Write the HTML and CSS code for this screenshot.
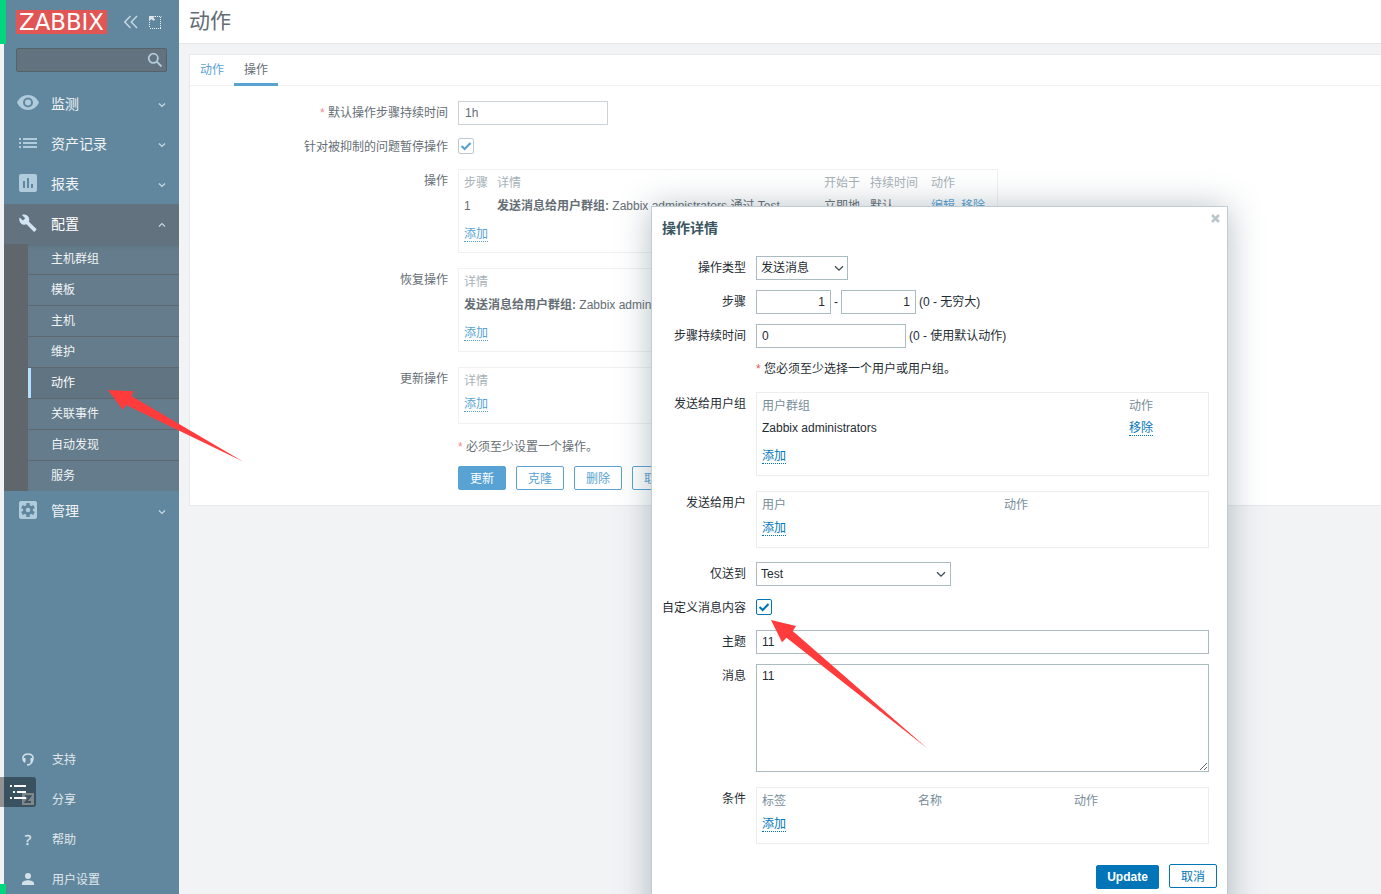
FILE: index.html
```
<!DOCTYPE html>
<html lang="zh-CN">
<head>
<meta charset="utf-8">
<title>动作</title>
<link rel="stylesheet" href="styles.css">
</head>
<body>
<div class="page">
  <aside class="sidebar">
    <div class="brand">
      <span class="logo">ZABBIX</span>
      <svg class="collapse" width="16" height="14" viewBox="0 0 16 14"><path d="M7.500 1 1.800 7l5.700 6M14 1 8.300 7l5.700 6"/></svg>
      <svg class="kiosk" width="13" height="13" viewBox="0 0 13 13"><path class="dots" d="M6 .5h6.500M11.500 1v11M1 12.500h11M.5 6v6"/><path class="tip" d="M0 0h6L4.300 1.700 6 3.500 4.500 5 2.500 3 0 5.500z"/></svg>
    </div>
    <div class="search"><svg width="16" height="16" viewBox="0 0 16 16"><circle cx="6.300" cy="6.300" r="4.600"/><path d="M9.700 9.700 14.500 14.500"/></svg></div>
    <nav class="menu">
      <a class="item"><svg class="ico" width="22" height="16" viewBox="0 0 22 16"><path fill-rule="evenodd" d="M11 0C6 0 2 3 0 7.500 2 12 6 15 11 15s9-3 11-7.500C20 3 16 0 11 0zm0 12.500a5 5 0 1 1 0-10 5 5 0 0 1 0 10z"/><circle cx="11" cy="7.500" r="3"/></svg><span>监测</span><svg class="chev" viewBox="0 0 8 6"><path d="M1 1.500 4 4.500 7 1.500"/></svg></a>
      <a class="item"><svg class="ico" width="18" height="12" viewBox="0 0 18 12"><path d="M0 1h2v2H0zM0 5h2v2H0zM0 9h2v2H0zM4 1h14v2H4zM4 5h14v2H4zM4 9h14v2H4z"/></svg><span>资产记录</span><svg class="chev" viewBox="0 0 8 6"><path d="M1 1.500 4 4.500 7 1.500"/></svg></a>
      <a class="item"><svg class="ico" width="18" height="18" viewBox="0 0 18 18"><path fill-rule="evenodd" d="M2 0h14a2 2 0 0 1 2 2v14a2 2 0 0 1-2 2H2a2 2 0 0 1-2-2V2a2 2 0 0 1 2-2zm2 7v7h2V7zm4-3v10h2V4zm4 6v4h2v-4z"/></svg><span>报表</span><svg class="chev" viewBox="0 0 8 6"><path d="M1 1.500 4 4.500 7 1.500"/></svg></a>
      <a class="item open"><svg class="ico" width="18" height="18" viewBox="0 0 18 19"><path d="M17.700 15.700 10 8.200c.7-2 .3-4.400-1.300-6C7 .6 4.600.2 2.600 1.100l3.500 3.400-2.500 2.400L.2 3.600C-.8 5.500-.2 8 1.400 9.700c1.600 1.600 4 2 6 1.200l7.500 7.500c.4.4.8.4 1.200 0l1.600-1.600c.4-.4.4-.8 0-1.100z"/></svg><span>配置</span><svg class="chev" viewBox="0 0 8 6"><path d="M1 4.500 4 1.500 7 4.500"/></svg></a>
      <div class="submenu">
        <a>主机群组</a><a>模板</a><a>主机</a><a>维护</a><a class="current">动作</a><a>关联事件</a><a>自动发现</a><a>服务</a>
      </div>
      <a class="item"><svg class="ico" width="18" height="18" viewBox="0 0 18 18"><path d="M2 0h14a2 2 0 0 1 2 2v14a2 2 0 0 1-2 2H2a2 2 0 0 1-2-2V2a2 2 0 0 1 2-2z"/><g class="cut"><circle cx="9" cy="9" r="5"/><path d="M7.300 2h3.400v14H7.300zM2.100 7l1.700-3 12.100 7-1.700 3zM14.200 4l1.700 3-12.100 7-1.700-3z"/></g><circle cx="9" cy="9" r="2.200"/></svg><span>管理</span><svg class="chev" viewBox="0 0 8 6"><path d="M1 1.500 4 4.500 7 1.500"/></svg></a>
    </nav>
    <nav class="userlinks">
      <a><svg width="12" height="13" viewBox="0 0 12 13"><path class="stroke" d="M2 8.500C-.6 3.500 2 .9 6 .9s6.600 2.600 4 7.600c-.4 2-1.700 3-3.500 3.300"/><path d="M1.300 5h2.200v4.500H2.200L.8 7.500zM10.700 5H8.500v4.500h1.300l1.400-2zM5 11h2.500v1.600H5z"/></svg><span>支持</span></a>
      <a><svg width="12" height="12" viewBox="0 0 12 12"><path d="M0 0h12v12H0z"/><path class="cutline" d="M3 3.200h5.200L3.800 8.900H9"/></svg><span>分享</span></a>
      <a><b class="question">?</b><span>帮助</span></a>
      <a><svg width="12" height="12" viewBox="0 0 12 12"><circle cx="6" cy="3" r="3"/><path d="M0 12v-1.700C0 8.300 3.500 7.300 6 7.300s6 1 6 3V12z"/></svg><span>用户设置</span></a>
    </nav>
  </aside>

  <main class="content">
    <header class="title"><h1>动作</h1></header>
    <section class="panel">
      <div class="tabs"><a>动作</a><a class="active">操作</a></div>
      <div class="form">
        <div class="row"><label><i>*</i> 默认操作步骤持续时间</label><input class="field" value="1h"></div>
        <div class="row check"><label>针对被抑制的问题暂停操作</label><span class="checkbox"><svg viewBox="0 0 12 12"><path d="M1.500 6 4.700 9 10.500 3"/></svg></span></div>
        <div class="row tall"><label>操作</label>
          <div class="box ops">
            <div class="tr head"><span>步骤</span><span>详情</span><span>开始于</span><span>持续时间</span><span>动作</span></div>
            <div class="tr"><span>1</span><span><b>发送消息给用户群组:</b> Zabbix administrators 通过 Test</span><span>立即地</span><span>默认</span><span><a class="link">编辑</a><a class="link next">移除</a></span></div>
            <div class="add spaced"><a class="link">添加</a></div>
          </div></div>
        <div class="row tall"><label>恢复操作</label>
          <div class="box">
            <div class="tr head"><span>详情</span></div>
            <div class="tr"><span><b>发送消息给用户群组:</b> Zabbix administrators</span></div>
            <div class="add spaced"><a class="link">添加</a></div>
          </div></div>
        <div class="row tall"><label>更新操作</label>
          <div class="box short">
            <div class="tr head"><span>详情</span></div>
            <div class="add"><a class="link">添加</a></div>
          </div></div>
        <div class="note"><i>*</i> 必须至少设置一个操作。</div>
        <div class="buttons"><button class="primary">更新</button><button>克隆</button><button>删除</button><button>取消</button></div>
      </div>
    </section>
  </main>

  <div class="dialog">
    <svg class="close" width="9" height="9" viewBox="0 0 9 9"><path d="M1 1l7 7M8 1 1 8"/></svg>
    <h2>操作详情</h2>
    <div class="row first"><label>操作类型</label><div class="select type">发送消息<svg viewBox="0 0 10 7"><path d="M1 1.200 5 5.200 9 1.200"/></svg></div></div>
    <div class="row"><label>步骤</label><input class="field num" value="1"><span class="dash">-</span><input class="field num" value="1"><span class="hint">(0 - 无穷大)</span></div>
    <div class="row"><label>步骤持续时间</label><input class="field" value="0"><span class="hint">(0 - 使用默认动作)</span></div>
    <div class="note"><i>*</i> 您必须至少选择一个用户或用户组。</div>
    <div class="row groups"><label>发送给用户组</label>
      <div class="box group-cols">
        <div class="tr head"><span>用户群组</span><span>动作</span></div>
        <div class="tr"><span>Zabbix administrators</span><span><a class="link">移除</a></span></div>
        <div class="add spaced"><a class="link">添加</a></div>
      </div></div>
    <div class="row tall"><label>发送给用户</label>
      <div class="box short user-cols">
        <div class="tr head"><span>用户</span><span>动作</span></div>
        <div class="add"><a class="link">添加</a></div>
      </div></div>
    <div class="row media"><label>仅送到</label><div class="select wide">Test<svg viewBox="0 0 10 7"><path d="M1 1.200 5 5.200 9 1.200"/></svg></div></div>
    <div class="row custom"><label>自定义消息内容</label><span class="checkbox"><svg viewBox="0 0 12 12"><path d="M1.500 6 4.700 9 10.500 3"/></svg></span></div>
    <div class="row"><label>主题</label><input class="field full" value="11"></div>
    <div class="row"><label>消息</label><textarea class="field">11</textarea></div>
    <div class="row tall"><label>条件</label>
      <div class="box short cond-cols">
        <div class="tr head"><span>标签</span><span>名称</span><span>动作</span></div>
        <div class="add"><a class="link">添加</a></div>
      </div></div>
    <div class="footer"><button class="primary update">Update</button><button>取消</button></div>
  </div>

  <span class="edge top"></span><span class="edge bottom"></span>
  <div class="toggle"><svg width="16" height="16" viewBox="0 0 16 16"><path d="M0 1h2v2H0zM4 1h12v2H4zM3 7h2v2H3zM7 7h9v2H7zM0 13h2v2H0zM4 13h12v2H4z"/></svg></div>
  <svg class="arrows" width="1381" height="894" viewBox="0 0 1381 894"><path d="M108 390 133.700 391.300 131.300 396 243 461.500 126 405 122.700 409.700zM771 620 796 626 792.700 631 927.500 748.500 786.500 637.700 782 642.300z"/></svg>
</div>
</body>
</html>
```

FILE: styles.css
```
* { box-sizing: border-box; }
body { margin: 0; font: 12px/20px "Liberation Sans", "Noto Sans CJK SC", sans-serif; color: #1f2c33; }
.page { position: relative; display: flex; width: 1381px; height: 894px; overflow: hidden; background: #f2f3f5; padding-left: 4px; }
h1, h2 { margin: 0; }
i { color: #e45959; font-style: normal; }
svg { flex: none; }

/* Sidebar */
.sidebar { width: 175px; height: 894px; background: #61879e; display: flex; flex-direction: column; color: #f0f4f6; }
.brand { display: flex; align-items: center; height: 44px; padding-left: 12px; }
.logo { width: 91px; height: 24px; background: #e25555; color: #fff; font: 22.8px/25px "DejaVu Sans", sans-serif; text-align: center; }
.collapse { margin-left: 16px; fill: none; stroke: #c5d6e0; stroke-width: 1.5; }
.kiosk { margin-left: 10px; }
.kiosk .dots { fill: none; stroke: #eef3f6; stroke-width: 1; stroke-dasharray: 1 1; }
.kiosk .tip { fill: #dce6ec; }
.search { margin: 4px 12px 0; height: 24px; background: #62727e; border: 1px solid #566269; border-radius: 2px; display: flex; align-items: center; justify-content: flex-end; padding-right: 3px; }
.search svg { fill: none; stroke: #b3ccda; stroke-width: 1.8; }
.menu { margin-top: 12px; }
.item { display: grid; grid-template-columns: 47px 1fr 34px; align-items: center; height: 40px; font-size: 14px; }
.item.open { background: #62727e; color: #fff; }
.ico { justify-self: center; fill: #b0cbdc; margin-bottom: 2px; }
.open .ico { fill: #d2e5f2; }
.cut { fill: #61879e; }
.chev { width: 8px; height: 6px; justify-self: center; fill: none; stroke: #c9dae4; stroke-width: 1.2; margin-top: 2px; }
.submenu { border-left: 24px solid #5f676c; background: #647c8b; height: 247px; overflow: hidden; box-shadow: inset 0 5px 5px -4px #5c6b76; }
.submenu a { display: block; height: 31px; line-height: 30px; padding-left: 23px; border-bottom: 1px solid #5c676e; }
.submenu .current { background: linear-gradient(90deg, #b3e0ff 3px, #617482 3px); color: #fff; }
.userlinks { margin-top: auto; margin-bottom: -6px; }
.userlinks a { height: 40px; display: grid; grid-template-columns: 48px 1fr; align-items: center; color: #e0e7ec; }
.userlinks svg, .question { justify-self: center; fill: #d5e1e8; margin-bottom: 2px; }
.userlinks .stroke { fill: none; stroke: #d5e1e8; stroke-width: 1.5; }
.userlinks .cutline { fill: none; stroke: #61879e; stroke-width: 2; }
.question { font: 15px/20px "Open Sans", sans-serif; -webkit-text-stroke: .4px #d5e1e8; color: #d5e1e8; }

/* Content behind the dialog */
.content { flex: 1; min-width: 0; color: #656e74; }
.title { height: 44px; background: #fff; border-bottom: 1px solid #e4e8eb; padding-left: 10px; }
h1 { font-size: 21px; font-weight: 400; line-height: 41px; color: #626c73; }
.panel { margin: 10px 0 0 10px; height: 452px; background: #fff; border: 1px solid #e6e9eb; border-right: 0; }
.tabs { display: flex; height: 31px; border-bottom: 1px solid #f0f2f3; }
.tabs a { padding: 0 10px; line-height: 31px; color: #58a3d3; }
.tabs .active { height: 31px; border-bottom: 3px solid #58a3d3; color: #656e74; }
.form { padding-top: 15px; }
.row { display: flex; margin-top: 10px; }
.row label { width: 258px; line-height: 25px; height: 24px; text-align: right; margin-right: 10px; flex: none; white-space: nowrap; }
.form > .row:first-child { margin-top: 0; }
.form i { color: #ed8c8c; }
.field { font: 12px/14px "Liberation Sans", "Noto Sans CJK SC", sans-serif; width: 150px; height: 24px; padding: 3px 5px; border: 1px solid #acbbc2; border-radius: 0; color: #1f2c33; background: #fff; outline: 0; flex: none; display: block; margin: 0; }
.content .field { border-color: #c9d2d7; color: #656e74; padding-left: 6px; }
.checkbox { width: 16px; height: 16px; border: 1px solid #bdc9cf; border-radius: 2px; display: flex; align-items: center; justify-content: center; margin-top: 4px; }
.checkbox svg { width: 12px; height: 12px; fill: none; stroke: #58a3d3; stroke-width: 2.2; }
.check { margin-top: 9px; height: 24px; }
.check label, .custom label { padding-top: 1px; }
.row.tall { margin-top: 15px; }
.row.check + .tall { margin-top: 11px; }
.box { width: 540px; border: 1px solid #f0f1f2; padding: 0 0 7px 5px; flex: none; }
.box.short { padding-bottom: 8px; }
.tr { display: grid; height: 22px; line-height: 22px; white-space: nowrap; }
.tr.head { height: 25px; line-height: 27px; color: #a6b1b7; }
.ops .tr { grid-template-columns: 33px 327px 46px 61px 1fr; }
.add { height: 22px; line-height: 22px; }
.add.spaced { margin-top: 6px; }
.link { display: inline-block; height: 15px; line-height: 15px; color: #58a3d3; border-bottom: 1px dotted #58a3d3; }
.link.next { margin-left: 6px; }
.note { margin: 13px 0 0 268px; height: 20px; line-height: 21px; }
.buttons { display: flex; gap: 10px; margin: 9px 0 0 268px; }
button { width: 48px; height: 24px; padding: 1px 0 0; border: 1px solid #58a3d3; border-radius: 2px; background: #fff; color: #58a3d3; font: 12px/22px "Liberation Sans", "Noto Sans CJK SC", sans-serif; }
button.primary { background: #58a3d3; color: #fff; }

/* Dialog */
.dialog { position: absolute; left: 651px; top: 206px; width: 577px; height: 720px; background: #fff; border: 1px solid #c0ccd2; box-shadow: 0 2px 32px rgba(60, 85, 100, .38); padding: 11px 0 0 10px; }
.close { position: absolute; right: 7px; top: 7px; fill: none; stroke: #b9c5cb; stroke-width: 2.5; }
h2 { font-size: 14px; line-height: 20px; color: #3c5563; }
.dialog .row label { width: 84px; }
.row.first { margin-top: 18px; }
.select { display: flex; align-items: center; justify-content: space-between; height: 24px; padding: 0 4px; border: 1px solid #acbbc2; }
.select svg { width: 10px; height: 7px; fill: none; stroke: #3f4a50; stroke-width: 1.3; }
.type { width: 92px; padding-right: 3px; }
.wide { width: 195px; }
.num { width: 75px; text-align: right; }
.dash { width: 10px; text-align: center; line-height: 24px; }
.hint { line-height: 24px; margin-left: 3px; }
.dialog .note { margin: 11px 0 0 94px; }
.row.groups { margin-top: 13px; }
.dialog .box { width: 453px; border-color: #ebedef; }
.dialog .head { color: #768d99; }
.group-cols .tr { grid-template-columns: 367px 1fr; }
.group-cols .tr:not(.head) { height: 21px; line-height: 21px; }
.box.group-cols { padding-bottom: 8px; }
.user-cols .tr { grid-template-columns: 242px 1fr; }
.cond-cols .tr { grid-template-columns: 156px 156px 1fr; }
.dialog .link { color: #0275b8; border-color: #0275b8; }
.row.media { margin-top: 14px; }
.row.custom { margin-top: 9px; height: 25px; }
.dialog .checkbox { border-color: #0275b8; }
.dialog .checkbox svg { stroke: #0275b8; }
.full { width: 453px; }
textarea.field { width: 453px; height: 108px; padding-top: 4px; resize: vertical; }
.footer { display: flex; justify-content: flex-end; gap: 10px; padding: 20px 10px 0 0; }
.dialog button { border-color: #0275b8; color: #0275b8; }
.dialog .primary { background: #0275b8; color: #fff; }
.dialog .update { width: 63px; margin-top: 1px; padding-top: 0; font-weight: 700; }

/* Floating page overlays */
.edge { position: absolute; left: 0; width: 6px; background: #04d67d; }
.edge.top { top: 0; height: 44px; }
.edge.bottom { bottom: 0; height: 10px; }
.toggle { position: absolute; left: 0; top: 777px; width: 36px; height: 30px; padding: 7px 0 0 10px; background: rgba(0, 0, 0, .4); border-radius: 0 3px 3px 0; }
.toggle svg { display: block; fill: #fff; }
.arrows { position: absolute; left: 0; top: 0; fill: #ff3b3b; pointer-events: none; }
```
